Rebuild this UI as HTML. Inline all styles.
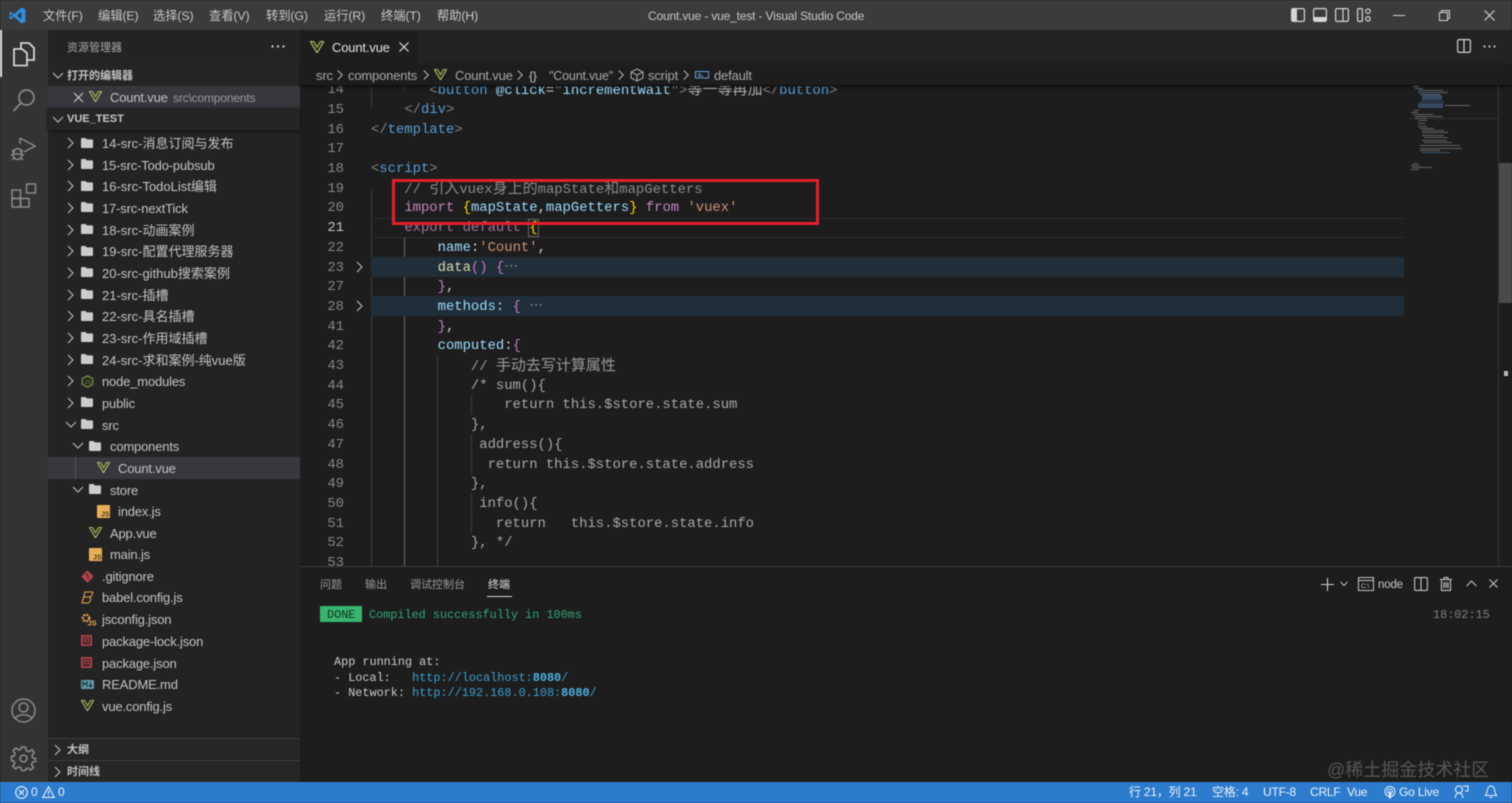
<!DOCTYPE html>
<html lang="zh"><head><meta charset="utf-8"><title>Count.vue - vue_test - Visual Studio Code</title>
<style>
html,body{margin:0;padding:0;width:1512px;height:803px;overflow:hidden;background:#1d1d1d}
body{position:relative;font-family:"Liberation Sans","Noto Sans CJK SC",sans-serif;font-size:13px;color:#ccc;filter:blur(.4px)}
.b{position:absolute}
svg{position:absolute;overflow:visible}
.r{position:absolute;left:102px;white-space:pre;line-height:20px;color:#c4c4c4;font-size:13px;margin-top:1px;letter-spacing:-.17px}
.q{letter-spacing:0}
.l2{left:110px}.l3{left:118px}
.code{position:absolute;left:300px;top:86px;width:1198px;height:480px;overflow:hidden;font-family:"Liberation Mono","Noto Sans CJK SC",monospace;font-size:13.88px}
.n{position:absolute;left:0;width:44px;text-align:right;color:#858585;line-height:19.71px;white-space:pre;margin-top:1.3px}
.c{position:absolute;left:71px;white-space:pre;line-height:19.71px;color:#d4d4d4;margin-top:1.3px}
.z{font-size:15px;font-family:"Noto Sans CJK SC",sans-serif;line-height:1}
.g{position:absolute;width:1px;background:#3c3c3c}
.tg{color:#808080}.tn{color:#569cd6}.at{color:#9cdcfe}.st{color:#ce9178}.kw{color:#c586c0}.y{color:#ffd700}.v{color:#9cdcfe}.f{color:#dcdcaa}.p{color:#c678c8}.w{color:#d4d4d4}.d{color:#b0b0b0}
.mn{font-size:12.3px;line-height:20px;top:6px;color:#c8c8c8;position:absolute;white-space:pre;letter-spacing:-.1px}
.sb{position:absolute;top:782px;line-height:21px;font-size:12px;color:#eef4fb;white-space:pre;letter-spacing:-.2px}
.term{position:absolute;font-family:"Liberation Mono","Noto Sans CJK SC",monospace;font-size:11.83px;line-height:16px;white-space:pre;color:#cccccc;margin-top:1px}
.ptab{position:absolute;top:577px;font-size:11px;line-height:16px;color:#9a9a9a}
</style></head><body>
<svg width="0" height="0" style="position:absolute"><defs>
<symbol id="vue" viewBox="0 0 14 12"><path d="M0.3 0.5H3.6L7 6.2 10.4 0.5H13.7L7 11.8Z" fill="none" stroke="#a9b85f" stroke-width="1.3"/><path d="M4 1 7 6 10 1" fill="none" stroke="#8fa24f" stroke-width="1.2"/></symbol>
<symbol id="fd" viewBox="0 0 12 10"><path d="M0 1.2Q0 0 1 0H4.6L5.8 1.4H11Q12 1.4 12 2.4V9Q12 10 11 10H1Q0 10 0 9Z" fill="#cccccc"/></symbol>
<symbol id="chr" viewBox="0 0 10 12"><path d="M2 1 7 6 2 11" fill="none" stroke="#c5c5c5" stroke-width="1"/></symbol>
<symbol id="chd" viewBox="0 0 12 10"><path d="M1 2 6 7 11 2" fill="none" stroke="#c5c5c5" stroke-width="1"/></symbol>
<symbol id="js" viewBox="0 0 13 13"><rect width="13" height="13" rx="1" fill="#e9ae5a"/><text x="4" y="11.5" font-family="Liberation Sans" font-size="7" font-weight="700" fill="#4d3c1c">JS</text></symbol>
<symbol id="npm" viewBox="0 0 11 11"><rect x=".9" y=".9" width="9.2" height="9.2" fill="none" stroke="#b2404a" stroke-width="1.8"/><path d="M3.4 8V3.4H7.6V8M5.5 8V5" fill="none" stroke="#b2404a" stroke-width="1.2"/></symbol>
</defs></svg>

<!-- title bar -->
<div class="b" style="left:0;top:0;width:1512px;height:30px;background:#3b3b3b"></div>
<svg style="left:9px;top:7px" width="17" height="17" viewBox="0 0 17 17"><path d="M12.3.6 16.4 2.3V14.7L12.3 16.4 5.2 9.9 1.9 12.4.6 11.7V5.3L1.9 4.6 5.2 7.1Z" fill="#2f8fe0"/><path d="M12.4 4.8 7.7 8.5 12.4 12.2Z" fill="#3b3b3b"/><path d="M2 6.4 4 8.5 2 10.6Z" fill="#3b3b3b"/></svg>
<div class="mn" style="left:43px">文件(F)</div><div class="mn" style="left:98px">编辑(E)</div><div class="mn" style="left:153px">选择(S)</div><div class="mn" style="left:209px">查看(V)</div><div class="mn" style="left:266px">转到(G)</div><div class="mn" style="left:324px">运行(R)</div><div class="mn" style="left:381px">终端(T)</div><div class="mn" style="left:437px">帮助(H)</div>
<div class="mn" style="left:648px;font-size:12px;letter-spacing:-.17px">Count.vue - vue_test - Visual Studio Code</div>
<svg style="left:1291px;top:8px" width="14" height="14" viewBox="0 0 14 14"><rect x=".6" y=".6" width="12.8" height="12.8" rx="1.5" fill="none" stroke="#d5d5d5" stroke-width="1.2"/><rect x="1" y="1" width="5" height="12" fill="#d5d5d5"/></svg>
<svg style="left:1313px;top:8px" width="14" height="14" viewBox="0 0 14 14"><rect x=".6" y=".6" width="12.8" height="12.8" rx="1.5" fill="none" stroke="#d5d5d5" stroke-width="1.2"/><rect x="1" y="9" width="12" height="4" fill="#d5d5d5"/></svg>
<svg style="left:1335px;top:8px" width="14" height="14" viewBox="0 0 14 14"><rect x=".6" y=".6" width="12.8" height="12.8" rx="1.5" fill="none" stroke="#d5d5d5" stroke-width="1.2"/><path d="M8 1V13" stroke="#d5d5d5" stroke-width="1.2"/></svg>
<svg style="left:1357px;top:8px" width="14" height="14" viewBox="0 0 14 14" fill="none" stroke="#d5d5d5" stroke-width="1.2"><rect x=".6" y=".6" width="4.8" height="12.8" rx="1"/><circle cx="11" cy="3.2" r="2.2"/><circle cx="11" cy="10.8" r="2.2"/></svg>
<svg style="left:1393px;top:15px" width="12" height="1"><rect width="12" height="1" fill="#d5d5d5"/></svg>
<svg style="left:1439px;top:10px" width="11" height="11" viewBox="0 0 11 11" fill="none" stroke="#d5d5d5"><rect x=".5" y="2.5" width="8" height="8"/><path d="M2.5 2.5V.5H10.5V8.5H8.5"/></svg>
<svg style="left:1484px;top:10px" width="11" height="11" viewBox="0 0 11 11"><path d="M.5.5 10.5 10.5M10.5.5.5 10.5" stroke="#d5d5d5" stroke-width="1.1"/></svg>

<!-- activity bar -->
<div class="b" style="left:0;top:30px;width:48px;height:752px;background:#333333"></div>
<div class="b" style="left:0;top:30px;width:2px;height:47px;background:#e8e8e8"></div>
<svg style="left:12px;top:41px" width="24" height="26" viewBox="0 0 24 26" fill="none" stroke="#e6e6e6" stroke-width="1.6"><path d="M9 8V2H17L22 7V19H15"/><path d="M2 8H10L15 12V24.500H2Z"/></svg>
<svg style="left:12px;top:88px" width="24" height="25" viewBox="0 0 24 25" fill="none" stroke="#8a8a8a" stroke-width="1.7"><circle cx="14.500" cy="9.500" r="7.500"/><path d="M9 15 1.500 23"/></svg>
<svg style="left:11px;top:135px" width="26" height="27" viewBox="0 0 26 27" fill="none" stroke="#8a8a8a" stroke-width="1.5"><path d="M9 3 24 11 13 17"/><path d="M9 3V9"/><ellipse cx="6.500" cy="19" rx="4.500" ry="5.500"/><path d="M1 15 4 17M12 15 9 17M0 20H2M11 20H13M1 25 3 23M12 25 10 23M2.500 19H10.500"/></svg>
<svg style="left:11px;top:183px" width="26" height="26" viewBox="0 0 26 26" fill="none" stroke="#8a8a8a" stroke-width="1.5"><rect x="1" y="7" width="8.500" height="8.500"/><rect x="1" y="15.500" width="8.500" height="8.500"/><rect x="9.500" y="15.500" width="8.500" height="8.500"/><rect x="15.500" y="1" width="9" height="9"/></svg>
<svg style="left:11px;top:698px" width="25" height="25" viewBox="0 0 25 25" fill="none" stroke="#8a8a8a" stroke-width="1.5"><circle cx="12.500" cy="12.500" r="11.500"/><circle cx="12.500" cy="9.500" r="4.500"/><path d="M4.500 20.500C6 15.500 19 15.500 20.500 20.500"/></svg>
<svg style="left:11px;top:746px" width="25" height="25" viewBox="0 0 25 25" fill="none" stroke="#8a8a8a" stroke-width="1.6"><circle cx="12.500" cy="12.500" r="3.500"/><path d="M10.500 1H14.500L15.200 4.500 18 5.700 21 3.700 23.300 6.500 21 9.500 22 12 24.500 12.500V15.500L21.500 16.200 20.500 18.800 22.500 21.500 19.800 24 17 22 14.800 23 14.300 24.500H10.700L10 21.800 7.500 20.800 4.500 23 1.800 20.300 3.800 17.500 2.800 15.200.5 14.500V10.500L3 10 4 7.500 2.200 4.500 5 2 7.800 4 10 3Z"/></svg>

<!-- sidebar -->
<div class="b" style="left:48px;top:30px;width:252px;height:752px;background:#232324"></div>
<div class="r q" style="left:67px;top:37px;font-size:11px;color:#a8a8a8">资源管理器</div>
<svg style="left:271px;top:45px" width="14" height="3"><circle cx="1.500" cy="1.500" r="1.200" fill="#c5c5c5"/><circle cx="7" cy="1.500" r="1.200" fill="#c5c5c5"/><circle cx="12.500" cy="1.500" r="1.200" fill="#c5c5c5"/></svg>
<div class="b" style="left:48px;top:64px;width:252px;height:22px;background:#252526"></div>
<svg style="left:52px;top:71px" width="12" height="10"><use href="#chd"/></svg>
<div class="r q" style="left:67px;top:65px;font-size:11px;font-weight:700;color:#c2c2c2">打开的编辑器</div>
<div class="b" style="left:48px;top:86px;width:252px;height:22px;background:#37373d"></div>
<svg style="left:73px;top:92px" width="11" height="11" viewBox="0 0 11 11"><path d="M1 1 10 10M10 1 1 10" stroke="#d0d0d0" stroke-width="1.1"/></svg>
<svg style="left:89px;top:91px" width="13" height="11"><use href="#vue"/></svg>
<div class="r" style="left:110px;top:87px;color:#c4c4c4">Count.vue</div><div class="r" style="left:173px;top:87px;font-size:12px;color:#9b9b9b">src\components</div>
<div class="b" style="left:48px;top:108px;width:252px;height:22px;background:#252526;box-shadow:0 1px 3px #111"></div>
<svg style="left:52px;top:115px" width="12" height="10"><use href="#chd"/></svg>
<div class="r q" style="left:67px;top:108px;font-size:11px;font-weight:700;color:#c8c8c8">VUE_TEST</div>

<div class="b" style="left:48px;top:457px;width:252px;height:22px;background:#37373d"></div>
<div class="b" style="left:75px;top:457px;width:1px;height:22px;background:#555"></div>

<!-- rows -->
<div class="r q" style="top:133px">14-src-消息订阅与发布</div>
<div class="r" style="top:155px">15-src-Todo-pubsub</div>
<div class="r q" style="top:176px">16-src-TodoList编辑</div>
<div class="r" style="top:198px">17-src-nextTick</div>
<div class="r q" style="top:220px">18-src-动画案例</div>
<div class="r q" style="top:241px">19-src-配置代理服务器</div>
<div class="r q" style="top:263px">20-src-github搜索案例</div>
<div class="r q" style="top:285px">21-src-插槽</div>
<div class="r q" style="top:306px">22-src-具名插槽</div>
<div class="r q" style="top:328px">23-src-作用域插槽</div>
<div class="r q" style="top:350px">24-src-求和案例-纯vue版</div>
<div class="r" style="top:371px">node_modules</div>
<div class="r" style="top:393px">public</div>
<div class="r" style="top:415px">src</div>
<div class="r l2" style="top:436px">components</div>
<div class="r l3" style="top:458px">Count.vue</div>
<div class="r l2" style="top:480px">store</div>
<div class="r l3" style="top:501px">index.js</div>
<div class="r l2" style="top:523px">App.vue</div>
<div class="r l2" style="top:544px">main.js</div>
<div class="r" style="top:566px">.gitignore</div>
<div class="r" style="top:587px">babel.config.js</div>
<div class="r" style="top:609px">jsconfig.json</div>
<div class="r" style="top:631px">package-lock.json</div>
<div class="r" style="top:653px">package.json</div>
<div class="r" style="top:674px">README.md</div>
<div class="r" style="top:696px">vue.config.js</div>

<!-- chevrons -->
<svg style="left:66px;top:137px" width="10" height="12"><use href="#chr"/></svg>
<svg style="left:66px;top:159px" width="10" height="12"><use href="#chr"/></svg>
<svg style="left:66px;top:180px" width="10" height="12"><use href="#chr"/></svg>
<svg style="left:66px;top:202px" width="10" height="12"><use href="#chr"/></svg>
<svg style="left:66px;top:224px" width="10" height="12"><use href="#chr"/></svg>
<svg style="left:66px;top:245px" width="10" height="12"><use href="#chr"/></svg>
<svg style="left:66px;top:267px" width="10" height="12"><use href="#chr"/></svg>
<svg style="left:66px;top:289px" width="10" height="12"><use href="#chr"/></svg>
<svg style="left:66px;top:310px" width="10" height="12"><use href="#chr"/></svg>
<svg style="left:66px;top:332px" width="10" height="12"><use href="#chr"/></svg>
<svg style="left:66px;top:354px" width="10" height="12"><use href="#chr"/></svg>
<svg style="left:66px;top:375px" width="10" height="12"><use href="#chr"/></svg>
<svg style="left:66px;top:397px" width="10" height="12"><use href="#chr"/></svg>
<svg style="left:65px;top:420px" width="12" height="10"><use href="#chd"/></svg>
<svg style="left:72px;top:441px" width="12" height="10"><use href="#chd"/></svg>
<svg style="left:72px;top:485px" width="12" height="10"><use href="#chd"/></svg>

<!-- folders -->
<svg style="left:81px;top:138px" width="12" height="10"><use href="#fd"/></svg>
<svg style="left:81px;top:159px" width="12" height="10"><use href="#fd"/></svg>
<svg style="left:81px;top:181px" width="12" height="10"><use href="#fd"/></svg>
<svg style="left:81px;top:202px" width="12" height="10"><use href="#fd"/></svg>
<svg style="left:81px;top:224px" width="12" height="10"><use href="#fd"/></svg>
<svg style="left:81px;top:246px" width="12" height="10"><use href="#fd"/></svg>
<svg style="left:81px;top:267px" width="12" height="10"><use href="#fd"/></svg>
<svg style="left:81px;top:289px" width="12" height="10"><use href="#fd"/></svg>
<svg style="left:81px;top:311px" width="12" height="10"><use href="#fd"/></svg>
<svg style="left:81px;top:332px" width="12" height="10"><use href="#fd"/></svg>
<svg style="left:81px;top:354px" width="12" height="10"><use href="#fd"/></svg>
<svg style="left:81px;top:375px" width="13" height="13" viewBox="0 0 13 13"><path d="M6.500.8 11.700 3.700V9.300L6.500 12.200 1.300 9.300V3.700Z" fill="none" stroke="#7f9a3e" stroke-width="1.200"/><text x="3.500" y="9" font-family="Liberation Sans" font-size="5.500" fill="#7f9a3e">JS</text></svg>
<svg style="left:81px;top:397px" width="12" height="10"><use href="#fd"/></svg>
<svg style="left:81px;top:419px" width="12" height="10"><use href="#fd"/></svg>
<svg style="left:89px;top:441px" width="12" height="10"><use href="#fd"/></svg>
<svg style="left:89px;top:484px" width="12" height="10"><use href="#fd"/></svg>
<svg style="left:97px;top:462px" width="13" height="11"><use href="#vue"/></svg>
<svg style="left:97px;top:505px" width="13" height="13"><use href="#js"/></svg>
<svg style="left:89px;top:527px" width="13" height="11"><use href="#vue"/></svg>
<svg style="left:89px;top:548px" width="13" height="13"><use href="#js"/></svg>
<svg style="left:81px;top:570px" width="13" height="13" viewBox="0 0 13 13"><path d="M6.500.3 12.700 6.500 6.500 12.700.3 6.500Z" fill="#b5434b"/><path d="M5 3.500 7 5.500V9" stroke="#232324" fill="none"/></svg>
<svg style="left:81px;top:591px" width="13" height="13" viewBox="0 0 13 13" fill="none" stroke="#e6a24f" stroke-width="1.100"><path d="M4 1H11.500Q12.500 3.500 9 6 11 8.500 7.500 12H1L4 1ZM3 6H9"/></svg>
<svg style="left:81px;top:613px" width="14" height="13" viewBox="0 0 14 13"><circle cx="5" cy="5" r="3.200" fill="none" stroke="#e3a84f" stroke-width="2.200" stroke-dasharray="2 1"/><text x="6.500" y="12.500" font-family="Liberation Sans" font-size="7.500" font-weight="700" fill="#e3a84f">JS</text></svg>
<svg style="left:81px;top:635px" width="11" height="11"><use href="#npm"/></svg>
<svg style="left:81px;top:657px" width="11" height="11"><use href="#npm"/></svg>
<svg style="left:81px;top:680px" width="13" height="9" viewBox="0 0 13 9"><rect width="13" height="9" rx="1" fill="#5f9aa8"/><path d="M2 7V2L4 4.500 6 2V7M9.500 2V6.500M8 5 9.500 7 11 5" fill="none" stroke="#1f2a2e" stroke-width="1"/></svg>
<svg style="left:81px;top:700px" width="13" height="11"><use href="#vue"/></svg>

<div class="b" style="left:48px;top:738px;width:252px;height:22px;background:#262627;border-top:1px solid #3c3c3c;box-sizing:border-box"></div>
<div class="b" style="left:48px;top:760px;width:252px;height:22px;background:#262627;border-top:1px solid #3c3c3c;box-sizing:border-box"></div>
<svg style="left:53px;top:744px" width="10" height="12"><use href="#chr"/></svg>
<svg style="left:53px;top:766px" width="10" height="12"><use href="#chr"/></svg>
<div class="r q" style="left:67px;top:739px;font-size:11px;font-weight:700;color:#c2c2c2">大纲</div>
<div class="r q" style="left:67px;top:761px;font-size:11px;font-weight:700;color:#c2c2c2">时间线</div>

<!-- tabs -->
<div class="b" style="left:300px;top:30px;width:1212px;height:34px;background:#232324"></div>
<div class="b" style="left:300px;top:30px;width:117px;height:34px;background:#1d1d1d"></div>
<svg style="left:310px;top:41px" width="14" height="12"><use href="#vue"/></svg>
<div class="r" style="left:332px;top:37px;color:#e2e2e2">Count.vue</div>
<svg style="left:399px;top:42px" width="10" height="10" viewBox="0 0 10 10"><path d="M.5.5 9.500 9.500M9.500.5.500 9.500" stroke="#e0e0e0" stroke-width="1.200"/></svg>
<svg style="left:1457px;top:39px" width="14" height="14" viewBox="0 0 14 14" fill="none" stroke="#d0d0d0" stroke-width="1.200"><rect x=".6" y=".6" width="12.800" height="12.800" rx="1.500"/><path d="M7 1V13"/></svg>
<svg style="left:1483px;top:45px" width="13" height="3"><circle cx="1.500" cy="1.500" r="1.100" fill="#c5c5c5"/><circle cx="6.500" cy="1.500" r="1.100" fill="#c5c5c5"/><circle cx="11.500" cy="1.500" r="1.100" fill="#c5c5c5"/></svg>

<!-- code -->
<div class="code">
<div class="g" style="left:71px;top:0;height:22px"></div>
<div class="g" style="left:104px;top:0;height:4px"></div>
<div class="g" style="left:71px;top:103px;height:377px"></div>
<div class="g" style="left:104px;top:151px;height:329px;background:#6a6a6a"></div>
<div class="g" style="left:137px;top:269px;height:211px"></div>
<div class="g" style="left:171px;top:309px;height:20px"></div>
<div class="g" style="left:171px;top:348px;height:40px"></div>
<div class="g" style="left:171px;top:407px;height:40px"></div>
<div class="b" style="left:71px;top:132px;width:1033px;height:18px;border-top:1px solid #2c2c2c;border-bottom:1px solid #2c2c2c"></div>
<div class="b" style="left:71px;top:171px;width:1033px;height:20px;background:#1f2e39"></div>
<div class="b" style="left:71px;top:210px;width:1033px;height:20px;background:#1f2e39"></div>

<div class="n" style="top:-6px">14</div><div class="c" style="top:-6px">       <span class="tg">&lt;</span><span class="tn">button</span> <span class="at">@click</span><span class="w">=</span><span class="st">"</span><span class="at">incrementWait</span><span class="st">"</span><span class="tg">&gt;</span><span class="z d">等一等再加</span><span class="tg">&lt;/</span><span class="tn">button</span><span class="tg">&gt;</span></div>
<div class="n" style="top:13.700px">15</div><div class="c" style="top:13.700px">    <span class="tg">&lt;/</span><span class="tn">div</span><span class="tg">&gt;</span></div>
<div class="n" style="top:33.400px">16</div><div class="c" style="top:33.400px"><span class="tg">&lt;/</span><span class="tn">template</span><span class="tg">&gt;</span></div>
<div class="n" style="top:53.100px">17</div>
<div class="n" style="top:72.800px">18</div><div class="c" style="top:72.800px"><span class="tg">&lt;</span><span class="tn">script</span><span class="tg">&gt;</span></div>
<div class="n" style="top:92.500px">19</div><div class="c" style="top:92.500px;color:#8a8a8a">    // <span class="z">引入</span>vuex<span class="z">身上的</span>mapState<span class="z">和</span>mapGetters</div>
<div class="n" style="top:112.200px">20</div><div class="c" style="top:112.200px">    <span class="kw">import</span> <span class="y">{</span><span class="v">mapState</span><span class="w">,</span><span class="v">mapGetters</span><span class="y">}</span> <span class="kw">from</span> <span class="st">'vuex'</span></div>
<div class="n" style="top:131.900px;color:#c6c6c6">21</div><div class="c" style="top:131.900px">    <span style="color:#a2709e">export default</span> <span class="y" style="outline:1px solid #666">{</span></div>
<div class="n" style="top:151.600px">22</div><div class="c" style="top:151.600px">        <span class="v">name</span><span class="w">:</span><span class="st">'Count'</span><span class="w">,</span></div>
<div class="n" style="top:171.300px">23</div><div class="c" style="top:171.300px">        <span class="f">data</span><span class="p">()</span> <span class="p">{</span><span style="color:#8a8a8a">⋯</span></div>
<div class="n" style="top:191px">27</div><div class="c" style="top:191px">        <span class="p">}</span><span class="w">,</span></div>
<div class="n" style="top:210.700px">28</div><div class="c" style="top:210.700px">        <span class="v">methods</span><span class="w">:</span> <span class="p">{</span><span style="color:#8a8a8a"> ⋯</span></div>
<div class="n" style="top:230.400px">41</div><div class="c" style="top:230.400px">        <span class="p">}</span><span class="w">,</span></div>
<div class="n" style="top:250.100px">42</div><div class="c" style="top:250.100px">        <span class="v">computed</span><span class="w">:</span><span class="p">{</span></div>
<div class="n" style="top:269.800px">43</div><div class="c" style="top:269.800px;color:#9a9a9a">            // <span class="z">手动去写计算属性</span></div>
<div class="n" style="top:289.500px">44</div><div class="c" style="top:289.500px;color:#a8a8a8">            /* sum(){</div>
<div class="n" style="top:309.200px">45</div><div class="c" style="top:309.200px;color:#a8a8a8">                return this.$store.state.sum</div>
<div class="n" style="top:328.900px">46</div><div class="c" style="top:328.900px;color:#a8a8a8">            },</div>
<div class="n" style="top:348.600px">47</div><div class="c" style="top:348.600px;color:#a8a8a8">             address(){</div>
<div class="n" style="top:368.300px">48</div><div class="c" style="top:368.300px;color:#a8a8a8">              return this.$store.state.address</div>
<div class="n" style="top:388px">49</div><div class="c" style="top:388px;color:#a8a8a8">            },</div>
<div class="n" style="top:407.700px">50</div><div class="c" style="top:407.700px;color:#a8a8a8">             info(){</div>
<div class="n" style="top:427.400px">51</div><div class="c" style="top:427.400px;color:#a8a8a8">               return   this.$store.state.info</div>
<div class="n" style="top:447.100px">52</div><div class="c" style="top:447.100px;color:#a8a8a8">            }, */</div>
<div class="n" style="top:466.800px">53</div>
</div>
<svg style="left:355px;top:261px" width="10" height="12"><use href="#chr"/></svg>
<svg style="left:355px;top:300px" width="10" height="12"><use href="#chr"/></svg>

<!-- breadcrumb -->
<div class="b" style="left:300px;top:64px;width:1212px;height:21px;background:#1d1d1d;box-shadow:0 2px 3px rgba(0,0,0,.55)"></div>
<div class="r" style="left:316px;top:65px;color:#a8a8a8">src</div>
<svg style="left:336px;top:69px" width="9" height="12"><use href="#chr"/></svg>
<div class="r" style="left:348px;top:65px;color:#a8a8a8">components</div>
<svg style="left:422px;top:69px" width="9" height="12"><use href="#chr"/></svg>
<svg style="left:434px;top:69px" width="13" height="11"><use href="#vue"/></svg>
<div class="r" style="left:455px;top:65px;color:#a8a8a8">Count.vue</div>
<svg style="left:516px;top:69px" width="9" height="12"><use href="#chr"/></svg>
<div class="r" style="left:529px;top:65px;color:#c8c8c8;font-size:12px">{}</div>
<div class="r" style="left:549px;top:65px;color:#a8a8a8;font-size:12.500px">"Count.vue"</div>
<svg style="left:617px;top:69px" width="9" height="12"><use href="#chr"/></svg>
<svg style="left:630px;top:68px" width="14" height="14" viewBox="0 0 14 14" fill="none" stroke="#b0b0b0"><path d="M7 1 13 4V10L7 13 1 10V4ZM1 4 7 7 13 4M7 7V13"/></svg>
<div class="r" style="left:648px;top:65px;color:#a8a8a8">script</div>
<svg style="left:682px;top:69px" width="9" height="12"><use href="#chr"/></svg>
<svg style="left:695px;top:69px" width="14" height="11" viewBox="0 0 14 11" fill="none" stroke="#6a9fd8"><rect x=".5" y="2.500" width="13" height="6.500"/><path d="M3 5H6M3 7H8"/></svg>
<div class="r" style="left:714px;top:65px;color:#a8a8a8">default</div>

<!-- minimap -->
<svg style="left:1405px;top:85px;opacity:.75" width="94" height="95" viewBox="0 0 94 95">
<rect x="5" y="33" width="89" height="1" fill="#2d3c4b"/>
<g fill="#6c7a88"><rect x="8" y="1" width="6" height="1"/><rect x="10" y="3" width="8" height="1"/><rect x="13" y="5" width="25" height="1"/><rect x="13" y="7" width="30" height="1"/><rect x="15" y="9" width="20" height="1"/></g>
<g fill="#3f5a7a"><rect x="17" y="10" width="20" height="5"/><rect x="15" y="16" width="24" height="1"/><rect x="13" y="18" width="25" height="5"/></g>
<g fill="#7a7a7a"><rect x="40" y="20" width="25" height="1"/><rect x="8" y="25" width="6" height="1"/><rect x="6" y="27" width="7" height="1"/><rect x="8" y="29" width="20" height="1"/><rect x="10" y="31" width="28" height="1"/><rect x="10" y="33" width="12" height="1"/><rect x="13" y="35" width="9" height="1"/><rect x="13" y="38" width="7" height="1"/><rect x="13" y="41" width="9" height="1"/><rect x="15" y="43" width="14" height="1"/><rect x="17" y="45" width="22" height="1"/><rect x="17" y="47" width="26" height="1"/><rect x="17" y="50" width="22" height="1"/><rect x="19" y="52" width="24" height="1"/><rect x="17" y="55" width="25" height="1"/><rect x="19" y="57" width="28" height="1"/><rect x="15" y="60" width="40" height="1"/><rect x="15" y="63" width="42" height="1"/><rect x="15" y="65" width="20" height="1"/><rect x="8" y="78" width="5" height="1"/><rect x="6" y="80" width="9" height="1"/><rect x="7" y="82" width="20" height="1"/><rect x="6" y="84" width="8" height="1"/></g>
<rect x="17" y="67" width="28" height="1" fill="#4a6a8a"/>
</svg>
<!-- scrollbar -->
<div class="b" style="left:1498px;top:86px;width:1px;height:480px;background:#333"></div>
<div class="b" style="left:1499px;top:163px;width:13px;height:140px;background:#4a4a4a"></div>
<div class="b" style="left:1504px;top:371px;width:4px;height:5px;background:#bdbdbd"></div>

<!-- red box -->
<div class="b" style="left:392px;top:179px;width:427px;height:46px;border:3px solid #e51f2a;box-sizing:border-box"></div>

<!-- panel -->
<div class="b" style="left:300px;top:566px;width:1212px;height:216px;background:#1d1d1d;border-top:1px solid #3c3c3c;box-sizing:border-box"></div>
<div class="ptab" style="left:320px">问题</div><div class="ptab" style="left:365px">输出</div><div class="ptab" style="left:410px">调试控制台</div><div class="ptab" style="left:488px;color:#e0e0e0">终端</div>
<div class="b" style="left:487px;top:596px;width:25px;height:1px;background:#d8d8d8"></div>
<svg style="left:1321px;top:578px" width="13" height="13" viewBox="0 0 13 13"><path d="M6.500 0V13M0 6.500H13" stroke="#cfcfcf" stroke-width="1.100"/></svg>
<svg style="left:1340px;top:581px" width="8" height="6" viewBox="0 0 8 6"><path d="M.5 1 4 4.500 7.500 1" fill="none" stroke="#c5c5c5"/></svg>
<svg style="left:1358px;top:577px" width="16" height="14" viewBox="0 0 16 14" fill="none" stroke="#c5c5c5"><rect x=".5" y=".5" width="15" height="13"/><path d="M.5 3.500H15.500"/><text x="3" y="11" font-family="Liberation Sans" font-size="6.500" fill="#c5c5c5" stroke="none">C:\</text></svg>
<div class="r" style="left:1378px;top:574px;font-size:11.500px;color:#c8c8c8">node</div>
<svg style="left:1414px;top:577px" width="14" height="14" viewBox="0 0 14 14" fill="none" stroke="#c5c5c5" stroke-width="1.100"><rect x=".6" y=".6" width="12.800" height="12.800" rx="1"/><path d="M7 1V13"/></svg>
<svg style="left:1440px;top:577px" width="12" height="14" viewBox="0 0 12 14" fill="none" stroke="#c5c5c5" stroke-width="1.100"><path d="M0 2.500H12M4 2.500V.6H8V2.500M1.500 2.500V13.400H10.500V2.500M4 5V11M6 5V11M8 5V11"/></svg>
<svg style="left:1466px;top:580px" width="11" height="7" viewBox="0 0 11 7"><path d="M.7 6 5.500 1 10.300 6" fill="none" stroke="#c5c5c5" stroke-width="1.100"/></svg>
<svg style="left:1489px;top:579px" width="9" height="9" viewBox="0 0 9 9"><path d="M.5.5 8.500 8.500M8.500.5.500 8.500" stroke="#c5c5c5" stroke-width="1.100"/></svg>
<div class="b" style="left:320px;top:606px;width:42px;height:16px;background:#38b56f"></div>
<div class="term" style="left:327px;top:606px;color:#12331f">DONE</div>
<div class="term" style="left:369px;top:606px;color:#2fa774">Compiled successfully in 100ms</div>
<div class="term" style="left:1433px;top:606px;color:#808080">18:02:15</div>
<div class="term" style="left:334px;top:653px">App running at:</div>
<div class="term" style="left:334px;top:669px">- Local:   <span style="color:#3b9fd0">http://localhost:<b style="color:#4fb3e6">8080</b>/</span></div>
<div class="term" style="left:334px;top:684px">- Network: <span style="color:#3b9fd0">http://192.168.0.108:<b style="color:#4fb3e6">8080</b>/</span></div>

<div class="r q" style="left:1327px;top:758px;font-size:18px;line-height:22px;color:#565656">@稀土掘金技术社区</div>

<!-- status -->
<div class="b" style="left:0;top:782px;width:1512px;height:21px;background:#2c7bcd"></div>
<svg style="left:15px;top:786px" width="13" height="13" viewBox="0 0 13 13" fill="none" stroke="#eef4fb" stroke-width="1.100"><circle cx="6.500" cy="6.500" r="5.800"/><path d="M4 4 9 9M9 4 4 9"/></svg>
<div class="sb" style="left:31px">0</div>
<svg style="left:42px;top:786px" width="13" height="12" viewBox="0 0 13 12" fill="none" stroke="#eef4fb" stroke-width="1.100"><path d="M6.500.8 12.300 11.400H.7ZM6.500 4.500V8M6.500 9V10"/></svg>
<div class="sb" style="left:58px">0</div>
<div class="sb" style="left:1129px">行 21，列 21</div>
<div class="sb" style="left:1212px">空格: 4</div>
<div class="sb" style="left:1263px">UTF-8</div>
<div class="sb" style="left:1310px">CRLF</div>
<div class="sb" style="left:1347px">Vue</div>
<svg style="left:1384px;top:786px" width="12" height="13" viewBox="0 0 12 13" fill="none" stroke="#eef4fb"><circle cx="6" cy="5.500" r="5"/><circle cx="6" cy="5.500" r="2.500"/><path d="M6 5V12.500" stroke-width="1.800"/></svg>
<div class="sb" style="left:1399px">Go Live</div>
<svg style="left:1454px;top:785px" width="15" height="14" viewBox="0 0 15 14" fill="none" stroke="#eef4fb"><circle cx="5" cy="4.500" r="3.500"/><path d="M1 13C1.500 10 3 8 5 8S8.500 10 9 13M9 1H14V6H11"/></svg>
<svg style="left:1485px;top:785px" width="12" height="14" viewBox="0 0 12 14" fill="none" stroke="#eef4fb"><path d="M.5 10.500C2.500 9 1.500 1 6 1S9.500 9 11.500 10.500ZM4.500 12.500H7.500"/></svg>
</body></html>
